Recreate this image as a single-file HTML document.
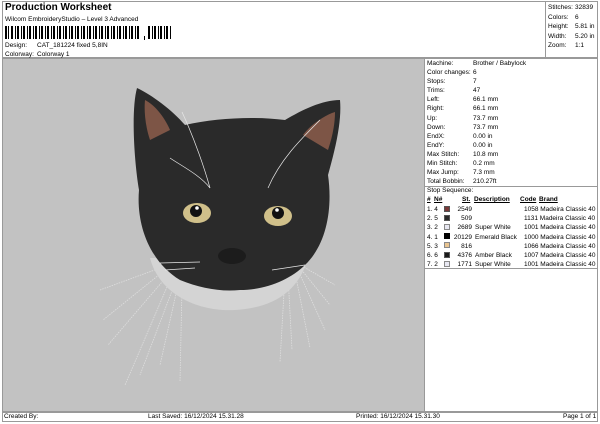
<!DOCTYPE html>
<html><head><meta charset="utf-8"><style>
*{margin:0;padding:0;box-sizing:border-box}
body{width:600px;height:424px;background:#fff;font-family:"Liberation Sans",sans-serif;color:#000;position:relative;overflow:hidden;font-size:6.5px}
.a{position:absolute;white-space:nowrap}
</style></head><body>
<div class="a" style="left:2px;top:1px;width:596px;height:57px;border:1px solid #999"></div>
<div class="a" style="left:5px;top:2px;font-size:10px;font-weight:bold">Production Worksheet</div>
<div class="a" style="left:5px;top:16px">Wilcom EmbroideryStudio – Level 3 Advanced</div>
<svg class="a" style="left:5px;top:26px" width="170" height="14">
<g fill="#000">
<rect x="0" y="0" width="2" height="13"/><rect x="3" y="0" width="1" height="13"/><rect x="6" y="0" width="2" height="13"/><rect x="10" y="0" width="1" height="13"/><rect x="12" y="0" width="2" height="13"/><rect x="16" y="0" width="1" height="13"/><rect x="18" y="0" width="2" height="13"/><rect x="22" y="0" width="1" height="13"/><rect x="24" y="0" width="2" height="13"/><rect x="28" y="0" width="1" height="13"/><rect x="30" y="0" width="2" height="13"/><rect x="34" y="0" width="1" height="13"/><rect x="36" y="0" width="2" height="13"/><rect x="40" y="0" width="1" height="13"/><rect x="42" y="0" width="2" height="13"/><rect x="46" y="0" width="1" height="13"/><rect x="48" y="0" width="2" height="13"/><rect x="52" y="0" width="1" height="13"/><rect x="54" y="0" width="2" height="13"/><rect x="58" y="0" width="1" height="13"/><rect x="60" y="0" width="2" height="13"/><rect x="64" y="0" width="1" height="13"/><rect x="66" y="0" width="2" height="13"/><rect x="70" y="0" width="1" height="13"/><rect x="72" y="0" width="2" height="13"/><rect x="76" y="0" width="1" height="13"/><rect x="78" y="0" width="2" height="13"/><rect x="82" y="0" width="1" height="13"/><rect x="84" y="0" width="2" height="13"/><rect x="88" y="0" width="1" height="13"/><rect x="90" y="0" width="2" height="13"/><rect x="94" y="0" width="1" height="13"/><rect x="96" y="0" width="2" height="13"/><rect x="100" y="0" width="1" height="13"/><rect x="102" y="0" width="2" height="13"/><rect x="106" y="0" width="1" height="13"/><rect x="108" y="0" width="2" height="13"/><rect x="112" y="0" width="1" height="13"/><rect x="114" y="0" width="2" height="13"/><rect x="118" y="0" width="1" height="13"/><rect x="120" y="0" width="2" height="13"/><rect x="124" y="0" width="1" height="13"/><rect x="126" y="0" width="2" height="13"/><rect x="130" y="0" width="1" height="13"/><rect x="132" y="0" width="2" height="13"/>
<rect x="139" y="10" width="1" height="4"/>
<rect x="143" y="0" width="2" height="13"/><rect x="147" y="0" width="1" height="13"/><rect x="149" y="0" width="2" height="13"/><rect x="153" y="0" width="1" height="13"/><rect x="155" y="0" width="2" height="13"/><rect x="159" y="0" width="1" height="13"/><rect x="161" y="0" width="2" height="13"/><rect x="165" y="0" width="1" height="13"/>
</g></svg>
<div class="a" style="left:5px;top:42px">Design:</div>
<div class="a" style="left:37px;top:42px">CAT_181224 fixed 5,8IN</div>
<div class="a" style="left:5px;top:51px">Colorway:</div>
<div class="a" style="left:37px;top:51px">Colorway 1</div>
<div class="a" style="left:545px;top:1px;width:1px;height:57px;background:#999"></div>
<div class="a" style="left:548px;top:3px;line-height:9.5px">Stitches:<br>Colors:<br>Height:<br>Width:<br>Zoom:</div>
<div class="a" style="left:575px;top:3px;line-height:9.5px">32839<br>6<br>5.81 in<br>5.20 in<br>1:1</div>

<div class="a" style="left:2px;top:58px;width:423px;height:354px;background:#c2c2c2;border:1px solid #999"></div>
<div class="a" style="left:424px;top:58px;width:174px;height:354px;border:1px solid #999"></div>
<div class="a" style="left:2px;top:412px;width:596px;height:10px;border:1px solid #999"></div>

<div class="a" style="left:427px;top:59px;line-height:9.1px">Machine:<br>Color changes:<br>Stops:<br>Trims:<br>Left:<br>Right:<br>Up:<br>Down:<br>EndX:<br>EndY:<br>Max Stitch:<br>Min Stitch:<br>Max Jump:<br>Total Bobbin:</div>
<div class="a" style="left:473px;top:59px;line-height:9.1px">Brother / Babylock<br>6<br>7<br>47<br>66.1 mm<br>66.1 mm<br>73.7 mm<br>73.7 mm<br>0.00 in<br>0.00 in<br>10.8 mm<br>0.2 mm<br>7.3 mm<br>210.27ft</div>
<div class="a" style="left:424px;top:186px;width:174px;height:1px;background:#999"></div>
<div class="a" style="left:427px;top:187px">Stop Sequence:</div>
<div class="a" style="left:427px;top:196px;font-weight:bold;text-decoration:underline">#</div>
<div class="a" style="left:434px;top:196px;font-weight:bold;text-decoration:underline">N#</div>
<div class="a" style="left:462px;top:196px;font-weight:bold;text-decoration:underline">St.</div>
<div class="a" style="left:474px;top:196px;font-weight:bold;text-decoration:underline">Description</div>
<div class="a" style="left:520px;top:196px;font-weight:bold;text-decoration:underline">Code</div>
<div class="a" style="left:539px;top:196px;font-weight:bold;text-decoration:underline">Brand</div>
<div class="a" style="left:427px;top:205px;line-height:9.2px">1. 4<br>2. 5<br>3. 2<br>4. 1<br>5. 3<br>6. 6<br>7. 2</div>
<div class="a" style="left:444px;top:206px;width:6px;height:6px;background:#7a3a3a;border:1px solid #555"></div>
<div class="a" style="left:444px;top:215px;width:6px;height:6px;background:#2a2a2a;border:1px solid #555"></div>
<div class="a" style="left:444px;top:224px;width:6px;height:6px;background:#e8e8f2;border:1px solid #888"></div>
<div class="a" style="left:444px;top:233px;width:6px;height:6px;background:#000"></div>
<div class="a" style="left:444px;top:242px;width:6px;height:6px;background:#e8c490;border:1px solid #888"></div>
<div class="a" style="left:444px;top:252px;width:6px;height:6px;background:#1a1a1a;border:1px solid #555"></div>
<div class="a" style="left:444px;top:261px;width:6px;height:6px;background:#e8e8f2;border:1px solid #888"></div>
<div class="a" style="left:452px;top:205px;line-height:9.2px;width:20px;text-align:right">2549<br>509<br>2689<br>20129<br>816<br>4376<br>1771</div>
<div class="a" style="left:475px;top:205px;line-height:9.2px"><br><br>Super White<br>Emerald Black<br><br>Amber Black<br>Super White</div>
<div class="a" style="left:524px;top:205px;line-height:9.2px">1058 Madeira Classic 40<br>1131 Madeira Classic 40<br>1001 Madeira Classic 40<br>1000 Madeira Classic 40<br>1066 Madeira Classic 40<br>1007 Madeira Classic 40<br>1001 Madeira Classic 40</div>
<div class="a" style="left:424px;top:268px;width:174px;height:1px;background:#999"></div>

<div class="a" style="left:4px;top:413px">Created By:</div>
<div class="a" style="left:148px;top:413px">Last Saved: 16/12/2024 15.31.28</div>
<div class="a" style="left:356px;top:413px">Printed: 16/12/2024 15.31.30</div>
<div class="a" style="left:563px;top:413px">Page 1 of 1</div>

<svg class="a" style="left:0;top:0" width="425" height="412">
<g stroke="#dedede" stroke-width="0.8" stroke-dasharray="1.5 1" fill="none">
<path d="M165,270 L103,320"/><path d="M168,275 L108,345"/><path d="M170,280 L125,385"/><path d="M175,283 L140,375"/><path d="M178,285 L160,365"/><path d="M182,287 L180,382"/><path d="M160,268 L100,290"/>
<path d="M285,275 L280,362"/><path d="M288,275 L292,350"/><path d="M295,272 L310,348"/><path d="M300,268 L330,305"/><path d="M302,266 L335,285"/><path d="M298,270 L325,330"/>
</g>
<path d="M150,258 C160,296 200,312 235,310 C270,308 298,294 308,258 Z" fill="#d4d4d4"/>
<path d="M137,88 C152,95 172,110 185,125 C215,118 255,116 285,120 C302,110 322,100 340,100 C342,122 335,150 328,175 C333,210 326,245 305,265 C290,280 265,290 240,290 C220,292 200,288 180,280 C150,262 136,225 139,190 C134,160 131,110 137,88 Z" fill="#2a2a2a"/>
<path d="M145,100 C155,105 165,118 170,130 L150,140 C145,125 144,110 145,100 Z" fill="#7d5546"/>
<path d="M335,112 C325,115 310,125 303,135 L328,150 C332,138 335,125 335,112 Z" fill="#7d5546"/>
<ellipse cx="197" cy="213" rx="14" ry="10" fill="#d0c08a"/><circle cx="196" cy="211" r="6" fill="#111"/><circle cx="197" cy="208" r="1.8" fill="#fff"/>
<ellipse cx="278" cy="216" rx="14" ry="10" fill="#d0c08a"/><circle cx="278" cy="213" r="6" fill="#111"/><circle cx="277" cy="210" r="1.8" fill="#fff"/>
<ellipse cx="232" cy="256" rx="14" ry="8" fill="#1c1c1c"/>
<g stroke="#e8e8e8" stroke-width="0.7" fill="none"><path d="M170,158 C180,165 200,175 210,188"/><path d="M182,112 C195,140 205,170 210,188"/><path d="M268,188 C280,160 300,140 320,120"/><path d="M160,263 L200,262"/><path d="M165,270 L195,268"/><path d="M272,270 L305,265"/></g>
</svg>
</body></html>
